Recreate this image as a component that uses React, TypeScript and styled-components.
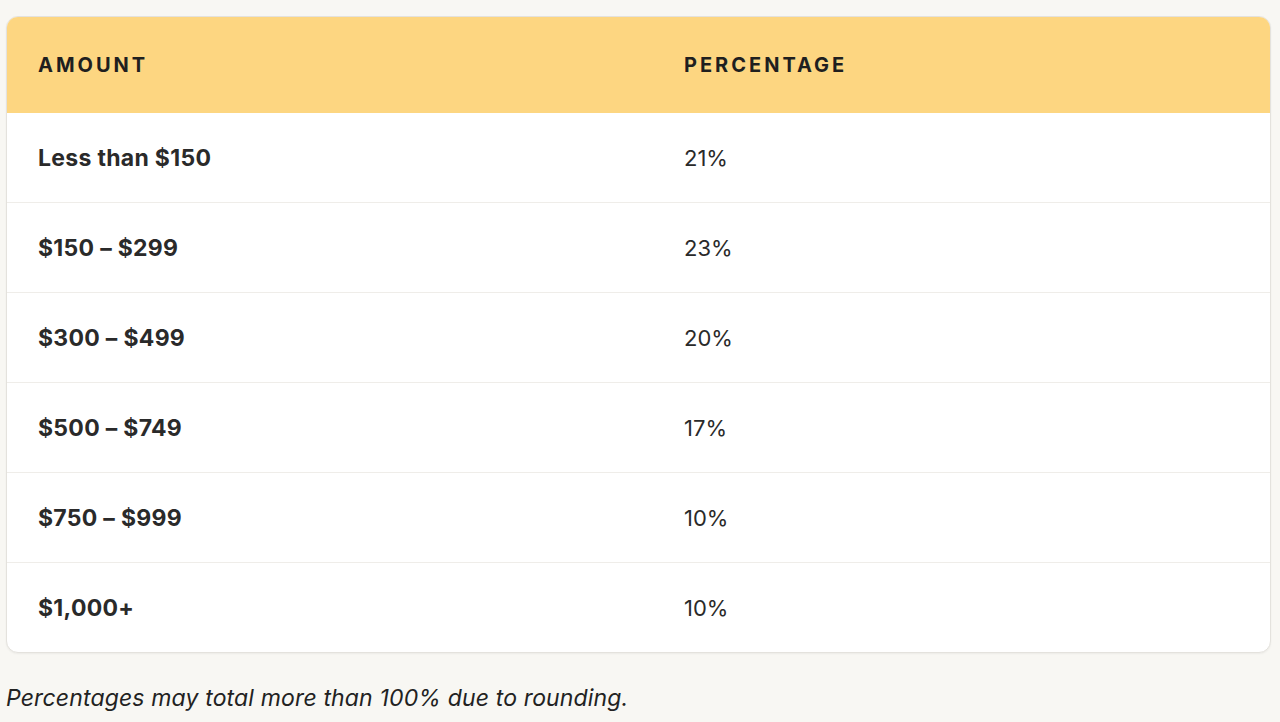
import React from "react";
import styled, { createGlobalStyle } from "styled-components";

const rows = [
  { amount: "Less than $150", pct: "21%" },
  { amount: "$150 – $299", pct: "23%" },
  { amount: "$300 – $499", pct: "20%" },
  { amount: "$500 – $749", pct: "17%" },
  { amount: "$750 – $999", pct: "10%" },
  { amount: "$1,000+", pct: "10%" },
];

export default function App(): React.ReactElement {
  return (
    <Page>
      <GlobalStyle />
      <Card>
        <HeadRow>
          <HeadCell>Amount</HeadCell>
          <HeadCell>Percentage</HeadCell>
        </HeadRow>
        {rows.map((r) => (
          <Row key={r.amount}>
            <AmountCell>{r.amount}</AmountCell>
            <PctCell>{r.pct}</PctCell>
          </Row>
        ))}
      </Card>
      <Note>Percentages may total more than 100% due to rounding.</Note>
    </Page>
  );
}

const GlobalStyle = createGlobalStyle`
  html, body {
    margin: 0;
    background: #f8f7f3;
  }
  body {
    font-family: Inter, "Noto Sans", sans-serif;
    color: #222;
  }
`;

const Page = styled.div`
  padding: 16px 9px 0 6px;
`;

const Card = styled.div`
  background: #fff;
  border: 1px solid #e4e2dd;
  border-radius: 12px;
  overflow: hidden;
  box-shadow: 0 1px 2px rgba(0, 0, 0, 0.05);
`;

const HeadRow = styled.div`
  display: grid;
  grid-template-columns: 646px 1fr;
  height: 96px;
  align-items: center;
  background: #fdd681;
`;

const HeadCell = styled.div`
  padding-left: 31px;
  font-size: 20px;
  font-weight: 700;
  letter-spacing: 3px;
  text-transform: uppercase;
  color: #1f1f1f;
`;

const Row = styled.div`
  display: grid;
  grid-template-columns: 646px 1fr;
  height: 89px;
  align-items: center;
  border-top: 1px solid #efede9;

  &:nth-child(2) {
    border-top: none;
  }
`;

const AmountCell = styled.div`
  padding-left: 31px;
  font-size: 23px;
  font-weight: 700;
  letter-spacing: 0.3px;
  color: #2a2a2a;
`;

const PctCell = styled.div`
  padding-left: 31px;
  font-size: 22px;
  font-weight: 400;
  color: #2a2a2a;
`;

const Note = styled.p`
  margin: 31px 0 0;
  font-size: 23px;
  font-style: italic;
  font-weight: 400;
  letter-spacing: 0.15px;
  color: #222;
`;
